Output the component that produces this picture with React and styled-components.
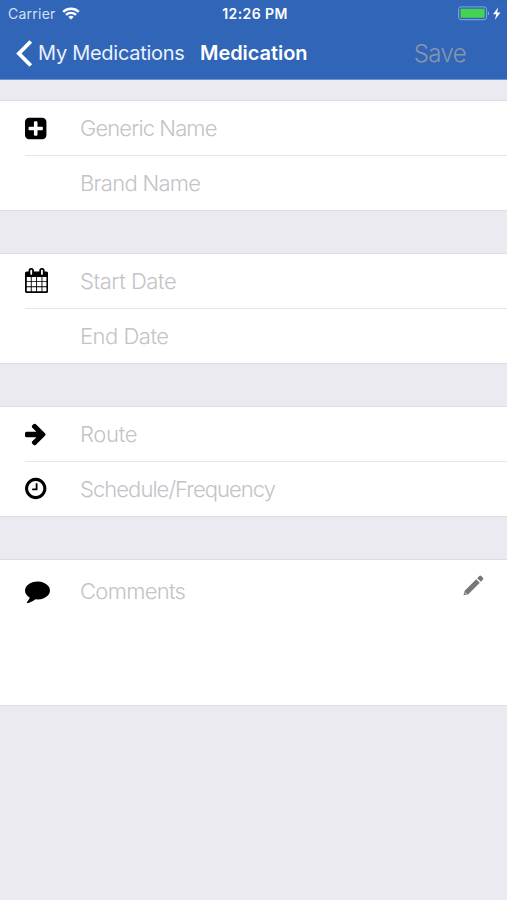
import React from "react";
import styled, { createGlobalStyle } from "styled-components";

const GlobalStyle = createGlobalStyle`
  * {
    box-sizing: border-box;
  }
  body {
    margin: 0;
    background-color: #eaeaf0;
    font-family: Inter, "Liberation Sans", sans-serif;
  }
`;

const Screen = styled.div`
  width: 100%;
  height: 900px;
  overflow: hidden;
  background-color: #eaeaf0;
`;

const Header = styled.header`
  height: 80px;
  background-color: #3065b8;
  border-bottom: 1px solid #6f95d0;
  color: #ffffff;
`;

const StatusBar = styled.div`
  display: grid;
  grid-template-columns: 1fr auto 1fr;
  align-items: center;
  height: 27px;
  padding: 0 5px 0 8px;
`;

const Carrier = styled.div`
  display: flex;
  align-items: center;
  gap: 6px;
  font-size: 14px;
  letter-spacing: 0.25px;
  color: #d3e0f5;
`;

const Clock = styled.div`
  font-size: 14px;
  font-weight: 600;
  letter-spacing: 0.4px;
`;

const Battery = styled.div`
  display: flex;
  justify-content: flex-end;
`;

const NavBar = styled.nav`
  display: flex;
  align-items: center;
  height: 52px;
  padding: 0 41px 0 16px;
`;

const Back = styled.div`
  display: flex;
  align-items: center;
  gap: 5px;
  width: 184px;
  font-size: 20px;
  letter-spacing: -0.28px;
  white-space: nowrap;
  color: #eaf1fc;
`;

const Title = styled.h1`
  flex: 1;
  margin: 0;
  font-size: 20px;
  font-weight: 600;
  letter-spacing: -0.05px;
`;

const Save = styled.div`
  font-size: 24px;
  font-weight: 300;
  letter-spacing: -0.6px;
  color: #8796ae;
`;

const Form = styled.main`
  display: flex;
  flex-direction: column;
  gap: 42px;
  padding-top: 20px;
`;

const Group = styled.section`
  height: ${(props) => props.$height || 111}px;
  padding-left: 25px;
  background-color: #ffffff;
  border-top: 1px solid #dddde2;
  border-bottom: 1px solid #dddde2;
`;

const Row = styled.div`
  display: flex;
  align-items: ${(props) => (props.$tall ? "flex-start" : "center")};
  height: ${(props) => (props.$tall ? 144 : 54)}px;
  padding: ${(props) => (props.$tall ? "15px 23px 0 0" : "0")};

  & + & {
    border-top: 1px solid #e6e6e9;
    height: 55px;
  }
`;

const IconSlot = styled.div`
  display: flex;
  width: 55px;
  padding-top: ${(props) => props.$top || 0}px;
  padding-bottom: ${(props) => props.$bottom || 0}px;
`;

const Placeholder = styled.div`
  flex: 1;
  padding-bottom: 1px;
  font-size: 22px;
  font-weight: 300;
  line-height: 32px;
  letter-spacing: ${(props) => props.$spacing || -0.3}px;
  color: #c3c3c8;
`;

const icons = {
  plus: {
    box: "128 0 1664 1792",
    width: 23.2,
    d: "M1408 960v-128q0-26-19-45t-45-19h-320v-320q0-26-19-45t-45-19h-128q-26 0-45 19t-19 45v320h-320q-26 0-45 19t-19 45v128q0 26 19 45t45 19h320v320q0 26 19 45t45 19h128q26 0 45-19t19-45v-320h320q26 0 45-19t19-45zm256-544v960q0 119-84.5 203.5t-203.5 84.5h-960q-119 0-203.5-84.5t-84.5-203.5v-960q0-119 84.5-203.5t203.5-84.5h960q119 0 203.5 84.5t84.5 203.5z",
  },
  calendar: {
    box: "64 0 1664 1792",
    width: 23.2,
    d: "M192 1664h288v-288h-288v288zm352 0h320v-288h-320v288zm-352-352h288v-320h-288v320zm352 0h320v-320h-320v320zm-352-384h288v-288h-288v288zm736 736h320v-288h-320v288zm-384-736h320v-288h-320v288zm768 736h288v-288h-288v288zm-384-352h320v-320h-320v320zm-352-864v-288q0-13-9.5-22.5t-22.5-9.5h-64q-13 0-22.5 9.5t-9.5 22.5v288q0 13 9.5 22.5t22.5 9.5h64q13 0 22.5-9.5t9.5-22.5zm736 864h288v-320h-288v320zm-384-384h320v-288h-320v288zm384 0h288v-288h-288v288zm32-480v-288q0-13-9.5-22.5t-22.5-9.5h-64q-13 0-22.5 9.5t-9.5 22.5v288q0 13 9.5 22.5t22.5 9.5h64q13 0 22.5-9.5t9.5-22.5zm384-64v1280q0 52-38 90t-90 38h-1408q-52 0-90-38t-38-90v-1280q0-52 38-90t90-38h128v-96q0-66 47-113t113-47h64q66 0 113 47t47 113v96h384v-96q0-66 47-113t113-47h64q66 0 113 47t47 113v96h128q52 0 90 38t38 90z",
  },
  arrow: {
    box: "128 64 1664 1792",
    width: 23.2,
    d: "M1600 960q0 54-37 91l-651 651q-39 37-91 37-51 0-90-37l-75-75q-38-38-38-91t38-91l293-293h-704q-52 0-84.5-37.5t-32.5-90.5v-128q0-53 32.5-90.5t84.5-37.5h704l-293-294q-38-36-38-90t38-90l75-75q38-38 90-38 53 0 91 38l651 651q37 35 37 90z",
  },
  clock: {
    box: "128 0 1664 1792",
    width: 23.2,
    d: "M1024 544v448q0 14-9 23t-23 9h-320q-14 0-23-9t-9-23v-64q0-14 9-23t23-9h224v-352q0-14 9-23t23-9h64q14 0 23 9t9 23zm416 352q0-148-73-273t-198-198-273-73-273 73-198 198-73 273 73 273 198 198 273 73 273-73 198-198 73-273zm224 0q0 209-103 385.5t-279.5 279.5-385.5 103-385.5-103-279.5-279.5-103-385.5 103-385.5 279.5-279.5 385.5-103 385.5 103 279.5 279.5 103 385.5z",
  },
  comment: {
    box: "0 0 1792 1792",
    width: 25,
    d: "M1792 896q0 174-120 321.5t-326 233-450 85.5q-70 0-145-8-198 175-460 242-49 14-114 22-17 2-30.5-9t-17.5-29v-1q-3-4-.5-12t2-10 4.5-9.5l6-9 7-8.5 8-9q7-8 31-34.5t34.5-38 31-39.5 32.5-51 27-59 26-76q-157-89-247.5-220t-90.5-281q0-130 71-248.5t191-204.5 286-136.5 348-50.5q244 0 450 85.5t326 233 120 321.5z",
  },
};

function Icon({ name }) {
  const icon = icons[name];
  return (
    <svg width={icon.width} height="25" viewBox={icon.box}>
      <path d={icon.d} />
    </svg>
  );
}

function WifiIcon() {
  return (
    <svg width="18" height="13" viewBox="0 0 18 13" fill="none" stroke="#fff" strokeWidth="2.4">
      <path d="M1.2 4.9C5.5.7 12.5.7 16.8 4.9" />
      <path d="M4 7.9c2.8-2.7 7.2-2.7 10 0" />
      <path d="M9 12.6 6.3 9.9c1.5-1.4 3.9-1.4 5.4 0z" fill="#fff" stroke="none" />
    </svg>
  );
}

function BatteryIcon() {
  return (
    <svg width="44" height="15" viewBox="0 0 44 15">
      <rect x="0.6" y="0.9" width="28" height="12.8" rx="2.5" fill="none" stroke="#85a9de" />
      <rect x="2.5" y="2.8" width="24.2" height="9" rx="0.8" fill="#43d551" />
      <path d="M30 5.2c1.6.7 1.6 3.5 0 4.2z" fill="#85a9de" />
      <path d="M40.3 1.2 35 8.3h3.3l-1.4 5.4 5.6-7.3h-3.5z" fill="#fff" />
    </svg>
  );
}

function PencilIcon() {
  return (
    <svg width="21" height="21" viewBox="0 0 21 21" fill="#777">
      <path d="M0.5 20.3 1.7 15.7 13.2 4.2 16.8 7.8 5.3 19.2z" />
      <path d="M14.2 3.2 16.3 1.1q1-1 2 0l1.6 1.6q1 1 0 2L17.8 6.8z" />
      <path d="M1.4 19.5 2.2 16.7 4.2 18.7z" fill="#aaa" />
    </svg>
  );
}

export default function App() {
  return (
    <Screen>
      <GlobalStyle />
      <Header>
        <StatusBar>
          <Carrier>
            Carrier <WifiIcon />
          </Carrier>
          <Clock>12:26 PM</Clock>
          <Battery>
            <BatteryIcon />
          </Battery>
        </StatusBar>
        <NavBar>
          <Back>
            <svg width="17" height="27" viewBox="0 0 17 27" fill="none" stroke="#fff" strokeWidth="3.9">
              <path d="M14.8 1.5 2.9 13.5l11.9 12" />
            </svg>
            My Medications
          </Back>
          <Title>Medication</Title>
          <Save>Save</Save>
        </NavBar>
      </Header>
      <Form>
        <Group>
          <Row>
            <IconSlot>
              <Icon name="plus" />
            </IconSlot>
            <Placeholder $spacing={-0.9}>Generic Name</Placeholder>
          </Row>
          <Row>
            <IconSlot />
            <Placeholder $spacing={-0.7}>Brand Name</Placeholder>
          </Row>
        </Group>
        <Group>
          <Row>
            <IconSlot $bottom={2}>
              <Icon name="calendar" />
            </IconSlot>
            <Placeholder $spacing={-0.45}>Start Date</Placeholder>
          </Row>
          <Row>
            <IconSlot />
            <Placeholder $spacing={-0.5}>End Date</Placeholder>
          </Row>
        </Group>
        <Group>
          <Row>
            <IconSlot>
              <Icon name="arrow" />
            </IconSlot>
            <Placeholder>Route</Placeholder>
          </Row>
          <Row>
            <IconSlot $bottom={1}>
              <Icon name="clock" />
            </IconSlot>
            <Placeholder $spacing={-0.95}>Schedule/Frequency</Placeholder>
          </Row>
        </Group>
        <Group $height={147}>
          <Row $tall>
            <IconSlot $top={3}>
              <Icon name="comment" />
            </IconSlot>
            <Placeholder $spacing={-0.7}>Comments</Placeholder>
            <PencilIcon />
          </Row>
        </Group>
      </Form>
    </Screen>
  );
}
